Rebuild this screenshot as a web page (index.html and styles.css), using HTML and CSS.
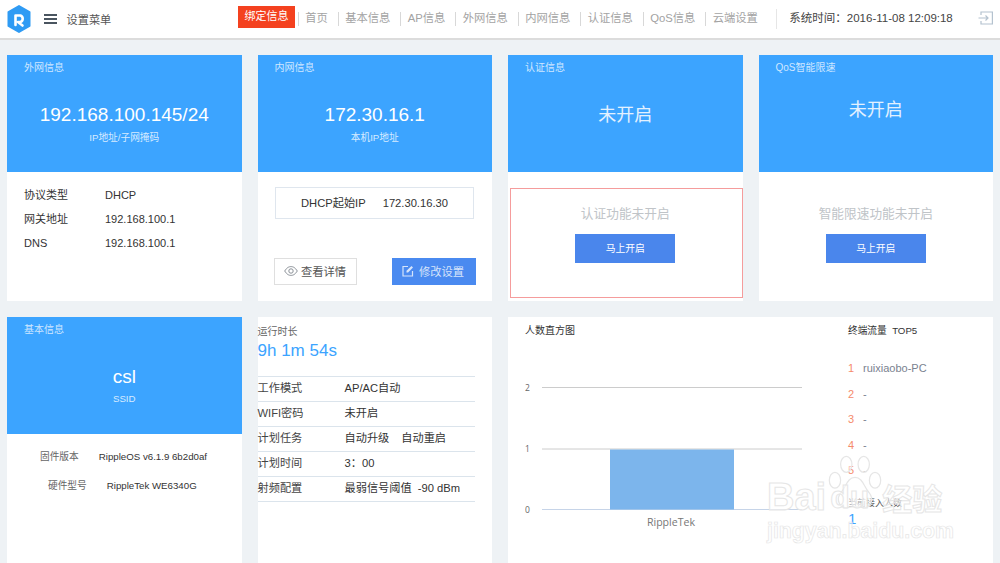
FILE: index.html
```html
<!DOCTYPE html>
<html lang="zh-CN">
<head>
    <meta charset="UTF-8">
    <title>设置菜单</title>
    <link rel="stylesheet" href="styles.css">
</head>
<body>
    <header class="topbar">
        <svg class="logo" width="24" height="28" viewBox="0 0 24 28">
            <path d="M12 1 L22.5 7 V21 L12 27 L1.5 21 V7 Z" fill="#2f9bf4" stroke="#2f9bf4" stroke-width="2" stroke-linejoin="round"/>
            <path d="M8.5 20 V10.5 H13.5 A3.5 3.5 0 0 1 13.5 17 H11 L15.5 20.5" fill="none" stroke="#fff" stroke-width="2.6" stroke-linecap="round" stroke-linejoin="round"/>
        </svg>
        <div class="burger"><span></span><span></span><span></span></div>
        <div class="menu-title">设置菜单</div>
        <nav class="nav">
            <a class="bind">绑定信息</a>
            <a class="nav-item item-home">首页</a>
            <a class="nav-item">基本信息</a>
            <a class="nav-item">AP信息</a>
            <a class="nav-item">外网信息</a>
            <a class="nav-item">内网信息</a>
            <a class="nav-item">认证信息</a>
            <a class="nav-item">QoS信息</a>
            <a class="nav-item">云端设置</a>
        </nav>
        <div class="clock">系统时间：2016-11-08 12:09:18</div>
        <svg class="logout" width="15" height="14" viewBox="0 0 15 14" fill="none" stroke="#b4c2cf" stroke-width="1.2">
            <path d="M3 4 V1 H14.4 V13 H3 V10"/>
            <path d="M0.5 7 H10 M7.5 4.5 L10 7 L7.5 9.5"/>
        </svg>
    </header>

    <main class="grid">
        <section class="card">
            <div class="blue">
                <div class="blue-title">外网信息</div>
                <div class="big">192.168.100.145/24</div>
                <div class="sub">IP地址/子网掩码</div>
            </div>
            <div class="wan">
                <div class="wan-row"><span>协议类型</span><span>DHCP</span></div>
                <div class="wan-row"><span>网关地址</span><span>192.168.100.1</span></div>
                <div class="wan-row"><span>DNS</span><span>192.168.100.1</span></div>
            </div>
        </section>

        <section class="card">
            <div class="blue">
                <div class="blue-title">内网信息</div>
                <div class="big">172.30.16.1</div>
                <div class="sub">本机IP地址</div>
            </div>
            <div class="lan">
                <div class="dhcp"><span>DHCP起始IP</span><span>172.30.16.30</span></div>
                <div class="lan-btns">
                    <button class="btn btn-line">
                        <svg width="14" height="10" viewBox="0 0 14 10" fill="none" stroke="#8a9097" stroke-width="1"><path d="M0.7 5 C3 1.4 5 .6 7 .6 S11 1.4 13.3 5 C11 8.6 9 9.4 7 9.4 S3 8.6 .7 5 Z"/><circle cx="7" cy="5" r="2.2"/></svg>
                        查看详情
                    </button>
                    <button class="btn btn-fill">
                        <svg width="12" height="12" viewBox="0 0 12 12" fill="none" stroke="#d5e4fb" stroke-width="1.2"><path d="M6 1.5 H1 V11 H10.5 V6"/><path d="M4.5 7.5 V5.8 L9.5 .9 L11 2.4 L6.1 7.5 Z" fill="#d5e4fb" stroke="none"/></svg>
                        修改设置
                    </button>
                </div>
            </div>
        </section>

        <section class="card">
            <div class="blue">
                <div class="blue-title">认证信息</div>
                <div class="big big-off">未开启</div>
            </div>
            <div class="off-wrap">
                <div class="off-box off-red">
                    <div class="off-text">认证功能未开启</div>
                    <button class="open-btn">马上开启</button>
                </div>
            </div>
        </section>

        <section class="card">
            <div class="blue">
                <div class="blue-title">QoS智能限速</div>
                <div class="big big-off big-qos">未开启</div>
            </div>
            <div class="off-wrap">
                <div class="off-box">
                    <div class="off-text">智能限速功能未开启</div>
                    <button class="open-btn">马上开启</button>
                </div>
            </div>
        </section>

        <section class="card">
            <div class="blue">
                <div class="blue-title">基本信息</div>
                <div class="big">csl</div>
                <div class="sub sub-ssid">SSID</div>
            </div>
            <div class="fw">
                <div class="fw-row fw-first"><span>固件版本</span><span>RippleOS v6.1.9 6b2d0af</span></div>
                <div class="fw-row fw-second"><span>硬件型号</span><span>RippleTek WE6340G</span></div>
            </div>
        </section>

        <section class="card run">
            <div class="run-label">运行时长</div>
            <div class="run-time">9h 1m 54s</div>
            <div class="run-table">
                <div class="run-row"><span>工作模式</span><span>AP/AC自动</span></div>
                <div class="run-row"><span>WIFI密码</span><span>未开启</span></div>
                <div class="run-row"><span>计划任务</span><span class="wide">自动升级<i></i>自动重启</span></div>
                <div class="run-row"><span>计划时间</span><span>3：00</span></div>
                <div class="run-row"><span>射频配置</span><span>最弱信号阈值 &nbsp;-90 dBm</span></div>
            </div>
        </section>

        <section class="card wide-card">
            <div class="chart">
                <div class="chart-title">人数直方图</div>
                <svg class="plot" width="300" height="170" viewBox="0 0 300 170">
                    <line x1="17" y1="13.5" x2="277" y2="13.5" stroke="#ccc"/>
                    <line x1="17" y1="75" x2="277" y2="75" stroke="#ccc"/>
                    <line x1="17" y1="135.5" x2="277" y2="135.5" stroke="#c6d4e8"/>
                    <rect x="85" y="75.5" width="124" height="60" fill="#7cb5ec"/>
                    <text x="0" y="17" class="tick">2</text>
                    <text x="0" y="78" class="tick">1</text>
                    <text x="0" y="139" class="tick">0</text>
                    <text x="146" y="152" class="cat" text-anchor="middle">RippleTek</text>
                </svg>
            </div>
            <div class="top5">
                <div class="top-title">终端流量 &nbsp;TOP5</div>
                <ol class="top-list">
                    <li><b>1</b>ruixiaobo-PC</li>
                    <li><b>2</b>-</li>
                    <li><b>3</b>-</li>
                    <li><b>4</b>-</li>
                    <li><b>5</b>-</li>
                </ol>
                <div class="now-label">当前接入人数</div>
                <div class="now-num">1</div>
            </div>
        </section>
    </main>

    <!-- 水印 -->
    <div class="mark">
        <svg class="paw" width="54" height="58" viewBox="0 0 62 62" preserveAspectRatio="none" fill="#fff" fill-opacity=".5" stroke="#e6e6e6" stroke-width="1.4">
            <ellipse cx="21" cy="10" rx="6.5" ry="8.5"/>
            <ellipse cx="41" cy="10" rx="6.5" ry="8.5"/>
            <ellipse cx="8" cy="27" rx="6.5" ry="8.5"/>
            <ellipse cx="54" cy="27" rx="6.5" ry="8.5"/>
            <path d="M31 24 C40 24 41 34 47 40 C54 48 48 58 39 56 C34 55 28 55 23 56 C14 58 8 48 15 40 C21 34 22 24 31 24 Z"/>
        </svg>
        <div class="mark-word"><span>Bai</span><span class="mark-du">du</span><span class="mark-cn">经验</span></div>
        <div class="mark-url">jingyan.baidu.com</div>
    </div>
</body>
</html>
```

FILE: styles.css
```css
* {
    box-sizing: border-box;
}
html, body {
    margin: 0;
    height: 563px;
    overflow: hidden;
}
body {
    position: relative;
    background-color: #eef2f5;
    font-family: "Liberation Sans", "Noto Sans CJK SC", sans-serif;
    font-size: 12px;
    color: #333;
}

/* 顶部 */
.topbar {
    display: flex;
    align-items: center;
    height: 40px;
    padding: 0 7px;
    background-color: #fff;
    border-bottom: 2px solid #dcdcdc;
}
.burger {
    width: 13px;
    margin-left: 13px;
}
.burger span {
    display: block;
    height: 2px;
    margin: 2px 0;
    background-color: #4a5560;
}
.menu-title {
    margin-left: 9.5px;
    color: #555;
    font-size: 11.2px;
}
.nav {
    display: flex;
    align-items: center;
    margin-left: 126.7px;
}
.bind {
    width: 57px;
    height: 22px;
    line-height: 21px;
    text-align: center;
    background-color: #f4411f;
    color: #fff;
    font-size: 11px;
    margin-top: -4px;
    margin-right: 3px;
}
.nav-item {
    height: 14px;
    line-height: 13px;
    padding-left: 6.3px;
    margin-right: 10px;
    border-left: 1px solid #d8d8d8;
    color: #a3a3a3;
    font-size: 11.3px;
}
.clock {
    height: 20px;
    line-height: 19px;
    margin-left: 8px;
    padding-left: 12.5px;
    border-left: 1px solid #e6e6e6;
    color: #444;
    font-size: 11.5px;
    white-space: nowrap;
}
.logout {
    margin-left: auto;
    margin-top: -2px;
}

/* 卡片 */
.grid {
    display: grid;
    grid-template-columns: repeat(4, 234.5px);
    grid-template-rows: 246px 246px;
    column-gap: 16px;
    row-gap: 16px;
    padding: 15px 0 0 7px;
}
.card {
    background-color: #fff;
}
.blue {
    height: 117px;
    padding: 6px 17px;
    background-color: #3ca4ff;
    color: #fff;
    text-align: center;
}
.blue-title {
    text-align: left;
    font-size: 10px;
    line-height: 13px;
    color: #cfe7ff;
}
.big {
    margin-top: 29px;
    font-size: 19px;
    line-height: 24px;
}
.big-off {
    font-size: 18px;
    color: #e3f1ff;
}
.big-qos {
    margin-top: 24px;
}
.sub {
    margin-top: 4px;
    font-size: 9.7px;
    line-height: 14px;
    color: #d7ebff;
}
.sub-ssid {
    margin-top: 3px;
}

.wan {
    padding: 11px 17px;
}
.wan-row {
    display: flex;
    height: 24px;
    line-height: 24px;
    font-size: 11px;
}
.wan-row span:first-child {
    width: 81px;
}

.lan {
    padding: 15px 16px;
}
.dhcp {
    display: flex;
    justify-content: center;
    gap: 17px;
    width: 199px;
    height: 32px;
    margin-left: 1.5px;
    line-height: 30px;
    border: 1px solid #dfe6ee;
    font-size: 11.2px;
}
.lan-btns {
    display: flex;
    justify-content: space-between;
    margin-top: 39px;
}
.btn {
    display: flex;
    align-items: center;
    justify-content: center;
    gap: 3px;
    height: 27px;
    font-family: inherit;
    font-size: 11.3px;
    padding: 0 0 2px;
}
.btn-line {
    width: 83px;
    background-color: #fff;
    border: 1px solid #dfdfdf;
    color: #555;
}
.btn-fill {
    width: 84px;
    background-color: #4a8af0;
    border: 0;
    color: #d5e4fb;
    gap: 5px;
    padding-right: 2px;
}

.off-wrap {
    padding: 16px 0 0 2px;
}
.off-box {
    height: 110px;
    width: 232.5px;
    padding: 17px 2px 0 0;
    text-align: center;
    border: 1px solid #fff;
}
.off-red {
    border: 1.5px solid #f59c9c;
}
.off-text {
    color: #c0c4c8;
    font-size: 12.7px;
    line-height: 17px;
}
.open-btn {
    display: block;
    width: 100px;
    height: 29px;
    margin: 11px auto 0;
    border: 0;
    padding: 0 0 2px;
    background-color: #4a86ec;
    color: #fff;
    font-family: inherit;
    font-size: 9.8px;
}

.fw {
    padding-top: 12px;
}
.fw-row {
    display: flex;
    height: 29px;
    line-height: 22px;
    font-size: 9.7px;
    color: #333;
}
.fw-row span:first-child {
    color: #666;
}
.fw-first {
    padding-left: 33px;
    gap: 20px;
}
.fw-second {
    padding-left: 41px;
    gap: 20px;
}

.run {
    padding: 8px 17px 0 0;
}
.run-label {
    font-size: 10px;
    line-height: 14px;
    color: #666;
}
.run-time {
    margin-top: 2px;
    font-size: 17px;
    line-height: 20px;
    color: #3ca4ff;
}
.run-table {
    margin-top: 15px;
    border-top: 1px solid #dbe4ec;
}
.run-row {
    display: flex;
    height: 25px;
    line-height: 23px;
    border-bottom: 1px solid #dbe4ec;
    font-size: 11.2px;
}
.run-row span:first-child {
    width: 87px;
    color: #444;
}
.run-row i {
    display: inline-block;
    width: 12px;
}

.wide-card {
    grid-column: span 2;
    display: flex;
    width: 485px;
}
.chart {
    width: 340px;
    padding: 7px 0 0 17px;
}
.chart-title {
    font-size: 10px;
    line-height: 14px;
}
.plot {
    display: block;
    margin-top: 36px;
}
.tick {
    font-size: 8.5px;
    fill: #666;
    font-family: "Open Sans", sans-serif;
}
.cat {
    font-size: 10.6px;
    fill: #777;
    font-family: "Open Sans", sans-serif;
}
.top5 {
    padding: 7px 0 0 0;
}
.top-title {
    font-size: 9.7px;
    line-height: 14px;
}
.top-list {
    list-style: none;
    margin: 18px 0 0;
    padding: 0;
}
.top-list li {
    height: 25.6px;
    line-height: 25.6px;
    font-size: 11px;
    color: #7a8290;
}
.top-list b {
    display: inline-block;
    width: 15px;
    font-weight: normal;
    color: #f58b6c;
}
.now-label {
    margin-top: 14px;
    font-size: 9px;
    line-height: 11px;
    color: #555;
}
.now-num {
    margin-top: 2px;
    font-size: 15px;
    line-height: 16px;
    color: #3ca4ff;
}

/* 水印 */
.mark {
    position: absolute;
    left: 762px;
    top: 455px;
    width: 238px;
    height: 108px;
}
.paw {
    position: absolute;
    left: 66px;
    top: 0;
}
.mark-word {
    position: absolute;
    left: 5px;
    top: 20px;
    display: flex;
    align-items: center;
    height: 44px;
    font-size: 38px;
    font-weight: bold;
    white-space: nowrap;
    color: rgba(255, 255, 255, .55);
    -webkit-text-stroke: 1px #e6e6e6;
}
.mark-du {
    width: 52px;
    margin-left: 4px;
    font-size: 32px;
}
.mark-cn {
    font-size: 30px;
}
.mark-url {
    position: absolute;
    left: 5px;
    top: 64px;
    font-size: 21.3px;
    font-weight: bold;
    white-space: nowrap;
    color: rgba(255, 255, 255, .55);
    -webkit-text-stroke: .7px #e6e6e6;
}
```
